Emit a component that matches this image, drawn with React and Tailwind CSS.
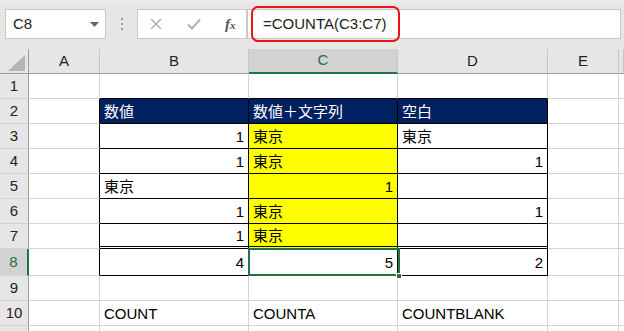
import React from "react";

const FONT = { fontFamily: '"Liberation Sans", "Noto Sans CJK JP", sans-serif' };

const COLS = ["A", "B", "C", "D", "E", ""];
const COLW = "grid-cols-[29px_71px_149px_149px_150px_71px_1fr]";

const data = {
  2: [null, { t: "数値" }, { t: "数値＋文字列" }, { t: "空白" }],
  3: [null, { t: "1", r: true }, { t: "東京" }, { t: "東京" }],
  4: [null, { t: "1", r: true }, { t: "東京" }, { t: "1", r: true }],
  5: [null, { t: "東京" }, { t: "1", r: true }, { t: "" }],
  6: [null, { t: "1", r: true }, { t: "東京" }, { t: "1", r: true }],
  7: [null, { t: "1", r: true }, { t: "東京" }, { t: "" }],
  8: [null, { t: "4", r: true }, { t: "5", r: true }, { t: "2", r: true }],
  10: [null, { t: "COUNT" }, { t: "COUNTA" }, { t: "COUNTBLANK" }],
};

function rowHeight(r) {
  if (r === 8) return "h-[27px]";
  return "h-[25px]";
}

function Cell({ r, c }) {
  const d = data[r] && data[r][c];
  const inTable = r >= 2 && r <= 8 && c >= 1 && c <= 3;
  let cls = "flex items-center px-[4px] border-r border-b ";
  if (inTable || (c === 0 && r >= 2 && r <= 8)) cls += "border-r-black ";
  else cls += "border-r-[#d4d4d4] ";
  if (inTable || (r === 1 && c >= 1 && c <= 3)) {
    if (r === 7) cls += "border-b-[3px] border-double border-b-black ";
    else cls += "border-b-black ";
  } else cls += "border-b-[#d4d4d4] ";
  if (r === 2 && inTable) cls += "bg-[#002060] text-white ";
  else if (c === 2 && r >= 3 && r <= 7) cls += "bg-[#ffff00] text-black ";
  else cls += "bg-white text-black ";
  if (d && d.r) cls += "justify-end ";
  return (
    <div className={cls + "text-[15px] leading-none whitespace-nowrap overflow-visible"}>
      {d ? d.t : ""}
    </div>
  );
}

export default function App() {
  const rows = [1, 2, 3, 4, 5, 6, 7, 8, 9, 10, 11];
  return (
    <div className="w-[624px] h-[331px] overflow-hidden bg-white relative" style={FONT}>
      {/* top bar */}
      <div className="h-[49px] bg-[#e6e6e6] border-t-[3px] border-t-[#ececec] flex items-start pt-[6px] pl-[5px] relative">
        <div className="w-[101px] h-[30px] bg-white border border-[#c8c8c8] flex items-center justify-between pl-[7px] pr-[6px] text-[15px] text-[#222]">
          <span>C8</span>
          <svg width="9" height="5" viewBox="0 0 9 5"><path d="M0 0 H9 L4.5 5 Z" fill="#666" /></svg>
        </div>
        <div className="w-[31px] h-[30px] flex items-center justify-center">
          <div className="flex flex-col gap-[3px]">
            <div className="w-[2px] h-[2px] bg-[#9a9a9a]" />
            <div className="w-[2px] h-[2px] bg-[#9a9a9a]" />
            <div className="w-[2px] h-[2px] bg-[#9a9a9a]" />
          </div>
        </div>
        <div className="w-[110px] h-[30px] bg-white border border-[#c8c8c8] flex items-center">
          <svg className="ml-[12px]" width="12" height="12" viewBox="0 0 12 12"><path d="M1 1 L11 11 M11 1 L1 11" stroke="#b0b0b0" strokeWidth="1.6" fill="none" /></svg>
          <svg className="ml-[25px]" width="14" height="12" viewBox="0 0 14 12"><path d="M1 6.5 L5 10.5 L13 1.5" stroke="#b0b0b0" strokeWidth="2" fill="none" /></svg>
          <span className="ml-[24px] text-[15px] text-[#555] italic font-bold" style={{ fontFamily: '"Liberation Serif", serif' }}>f<span className="text-[11px]">x</span></span>
        </div>
        <div className="flex-1 h-[30px] bg-white border border-[#c8c8c8] mr-[3px] flex items-center pl-[15px] text-[15px] text-[#222]">
          =COUNTA(C3:C7)
        </div>
        <div className="absolute left-[251px] top-[3px] w-[149px] h-[36px] border-2 border-[#ee1111] rounded-[7px]" />
      </div>

      {/* column header */}
      <div className={"grid h-[25px] " + COLW}>
        <div className="bg-[#e6e6e6] border-r border-r-[#9b9b9b] border-b border-b-[#9b9b9b] relative">
          <svg className="absolute left-[8px] top-[6px]" width="17" height="16" viewBox="0 0 17 16"><path d="M17 0 V16 H0 Z" fill="#b4b4b4" /></svg>
        </div>
        {COLS.map((c, i) => (
          <div
            key={i}
            className={
              "flex items-center justify-center text-[15px] border-r border-r-[#c6c6c6] " +
              (c === "C"
                ? "bg-[#d2d2d2] text-[#217346] border-b-2 border-b-[#217346]"
                : "bg-[#e6e6e6] text-[#222] border-b border-b-[#9b9b9b]")
            }
          >
            {c}
          </div>
        ))}
      </div>

      {rows.map((r) => (
        <div key={r} className={"grid " + rowHeight(r) + " " + COLW}>
          <div
            className={
              "flex items-center justify-center text-[15px] border-b border-b-[#d4d4d4] " +
              (r === 8
                ? "bg-[#d2d2d2] text-[#217346] border-r-2 border-r-[#217346]"
                : "bg-[#e6e6e6] text-[#222] border-r border-r-[#9b9b9b]")
            }
          >
            {r <= 10 ? r : ""}
          </div>
          {[0, 1, 2, 3, 4, 5].map((c) => (
            <Cell key={c} r={r} c={c} />
          ))}
        </div>
      ))}

      {/* selection C8 */}
      <div className="absolute left-[248px] top-[248px] w-[152px] h-[28px] border-2 border-[#217346] pointer-events-none" />
      <div className="absolute left-[396px] top-[273px] w-[6px] h-[6px] bg-[#217346] border border-white" />
    </div>
  );
}
